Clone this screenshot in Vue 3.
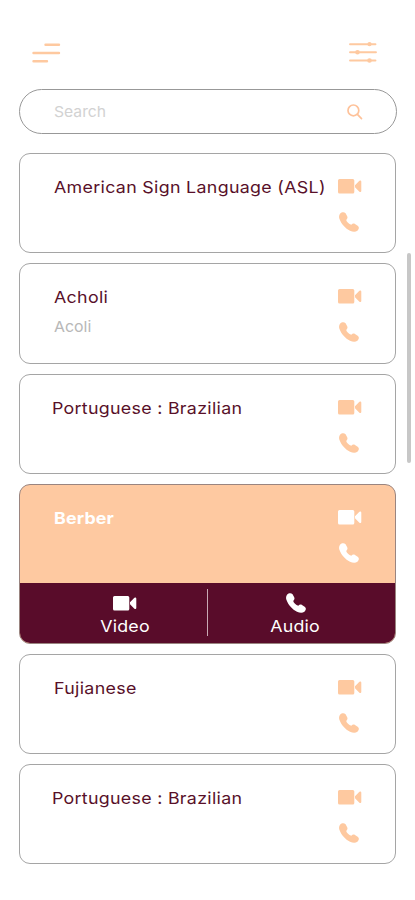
<script setup>
const languages = [
  { name: 'American Sign Language (ASL)', cls: 'asl' },
  { name: 'Acholi', alt: 'Acoli', cls: 'acholi' },
  { name: 'Portuguese : Brazilian', cls: 'portuguese' },
  { name: 'Berber', active: true, cls: 'berber' },
  { name: 'Fujianese', cls: 'fujianese' },
  { name: 'Portuguese : Brazilian', cls: 'portuguese' },
]
const videoPath = 'M1.500 0H14.800Q16.300 0 16.300 1.500V13Q16.300 14.500 14.800 14.500H1.500Q0 14.500 0 13V1.500Q0 0 1.500 0ZM17 6.200L21.400 1.800Q23.300 .8 23.300 2.800V11.800Q23.300 13.600 21.400 12.700L17 8.300Z'
const phonePath = 'M1.200 1.600C2.500 .1 5-.4 6.600 1.200L8.300 4.400C8.800 5.800 8.300 6.900 7.200 7.900C7.700 9.700 9.900 12 12.300 12.700C13.400 11.600 14.700 11.300 16 12L19 13.900C20.400 15.200 20 17.300 18.400 18.700C16.500 20.200 13.800 20 11 18.700C6.500 16.500 2.100 11.700.4 6.700C-.3 4.600.1 2.900 1.200 1.600Z'
</script>

<template>
  <main class="screen">
    <header class="topbar">
      <svg class="menu" viewBox="0 0 30 22" fill="none" stroke="#fec9a0" stroke-width="2.400" stroke-linecap="round">
        <path d="M14.500 2.700H28M2.500 11H28M2.500 19.300H16" />
      </svg>
      <svg class="filters" viewBox="0 0 30 22" fill="none" stroke="#fec9a0" stroke-width="1.900" stroke-linecap="round">
        <path d="M2 2.200H27.500M2 10.300H28M2 18.500H27.500" />
        <g fill="#fec9a0" stroke="none">
          <circle cx="21.500" cy="2.200" r="2.100" />
          <circle cx="9.500" cy="10.300" r="2.300" />
          <circle cx="21.500" cy="18.500" r="2.300" />
        </g>
      </svg>
    </header>

    <div class="search">
      <span class="placeholder">Search</span>
      <svg class="lens" viewBox="0 0 16 16" fill="none" stroke="#fec29a" stroke-width="1.700" stroke-linecap="round">
        <circle cx="6.400" cy="6.400" r="5.400" />
        <path d="M10.400 10.400L14.500 14.600" />
      </svg>
    </div>

    <section class="list">
      <article v-for="(item, i) in languages" :key="i" class="card" :class="[item.cls, { active: item.active }]">
        <div class="body">
          <div class="names">
            <div class="name">{{ item.name }}</div>
            <div v-if="item.alt" class="alt">{{ item.alt }}</div>
          </div>
          <div class="icons">
            <svg class="video" viewBox="0 0 24 15"><path :d="videoPath" /></svg>
            <svg class="phone" viewBox="0 0 20 20"><path :d="phonePath" /></svg>
          </div>
        </div>
        <div v-if="item.active" class="actions">
          <div class="action">
            <svg class="video" viewBox="0 0 24 15"><path :d="videoPath" /></svg>
            <span class="label">Video</span>
          </div>
          <div class="divider"></div>
          <div class="action">
            <svg class="phone" viewBox="0 0 20 20"><path :d="phonePath" /></svg>
            <span class="label">Audio</span>
          </div>
        </div>
      </article>
    </section>
    <div class="scrollbar"></div>
  </main>
</template>

<style>
body {
  margin: 0;
  background: #fff;
}
</style>

<style scoped>
.screen {
  position: relative;
  box-sizing: border-box;
  width: 415px;
  height: 900px;
  padding: 41px 19px 0;
  overflow: hidden;
  background: #fff;
  font-family: Inter, "Liberation Sans", sans-serif;
}
.topbar {
  display: flex;
  justify-content: space-between;
  height: 48px;
  padding: 1px 18px 0 12px;
  box-sizing: border-box;
}
.topbar svg {
  width: 30px;
  height: 22px;
}
.search {
  box-sizing: border-box;
  display: flex;
  align-items: center;
  justify-content: space-between;
  width: 378px;
  height: 45px;
  padding: 0 33px 0 34px;
  border: 1px solid #989898;
  border-radius: 23px;
}
.placeholder {
  color: #d2d2d2;
  font-size: 14.800px;
  transform: scaleX(1.06);
  transform-origin: left;
}
.lens {
  width: 16px;
  height: 16px;
}
.list {
  display: flex;
  flex-direction: column;
  gap: 10px;
  margin-top: 19px;
}
.card {
  box-sizing: border-box;
  width: 377px;
  height: 100.300px;
  border: 1px solid #a5a5a5;
  border-radius: 11px;
  overflow: hidden;
  color: #581029;
  background: #fff;
}
.card.active {
  height: 160px;
  border-color: #9a8580;
  color: #fff;
  background: #fec9a1;
}
.body {
  box-sizing: border-box;
  display: flex;
  justify-content: space-between;
  height: 98.500px;
  padding: 21px 33px 0 34px;
}
.active .body {
  height: 98px;
}
.names {
  width: 0;
}
.name {
  width: max-content;
  line-height: 24px;
  font-size: 16.500px;
  white-space: nowrap;
  letter-spacing: 0.290px;
  transform: scaleX(1.08);
  transform-origin: left;
}
.alt {
  width: max-content;
  margin-top: 7px;
  line-height: 22px;
  font-size: 15px;
  color: #b8b8b8;
  transform: scaleX(1.06);
  transform-origin: left;
}
.portuguese .body {
  padding-left: 32px;
}
.portuguese .name {
  letter-spacing: 0.270px;
}
.berber .name {
  font-weight: 700;
  letter-spacing: 0.150px;
}
.icons {
  flex: none;
  display: flex;
  flex-direction: column;
  gap: 18px;
  width: 24px;
  padding-top: 4px;
  fill: #fec9a0;
}
.video {
  display: block;
  width: 24px;
  height: 15px;
}
.phone {
  display: block;
  width: 20px;
  height: 20px;
}
.icons .phone {
  margin-left: 1px;
}
.active .icons,
.actions {
  fill: #fff;
}
.actions {
  display: flex;
  align-items: center;
  height: 60px;
  background: #590c2a;
}
.action {
  box-sizing: border-box;
  display: flex;
  flex-direction: column;
  align-items: center;
  justify-content: flex-end;
  width: 187px;
  height: 60px;
  padding-bottom: 6px;
  line-height: 22px;
  font-size: 16.500px;
}
.label {
  letter-spacing: 0.200px;
  transform: scaleX(1.08);
}
.action .video {
  margin-bottom: 4px;
}
.action .phone {
  margin-bottom: 2px;
}
.action:first-child {
  padding-left: 22px;
}
.action:last-child {
  padding-right: 12px;
}
.divider {
  flex: none;
  width: 1px;
  height: 47px;
  background: #c9a9b4;
}
.scrollbar {
  position: absolute;
  top: 253px;
  right: 4px;
  width: 4px;
  height: 210px;
  border-radius: 2px;
  background: #c7c7c7;
}
</style>
